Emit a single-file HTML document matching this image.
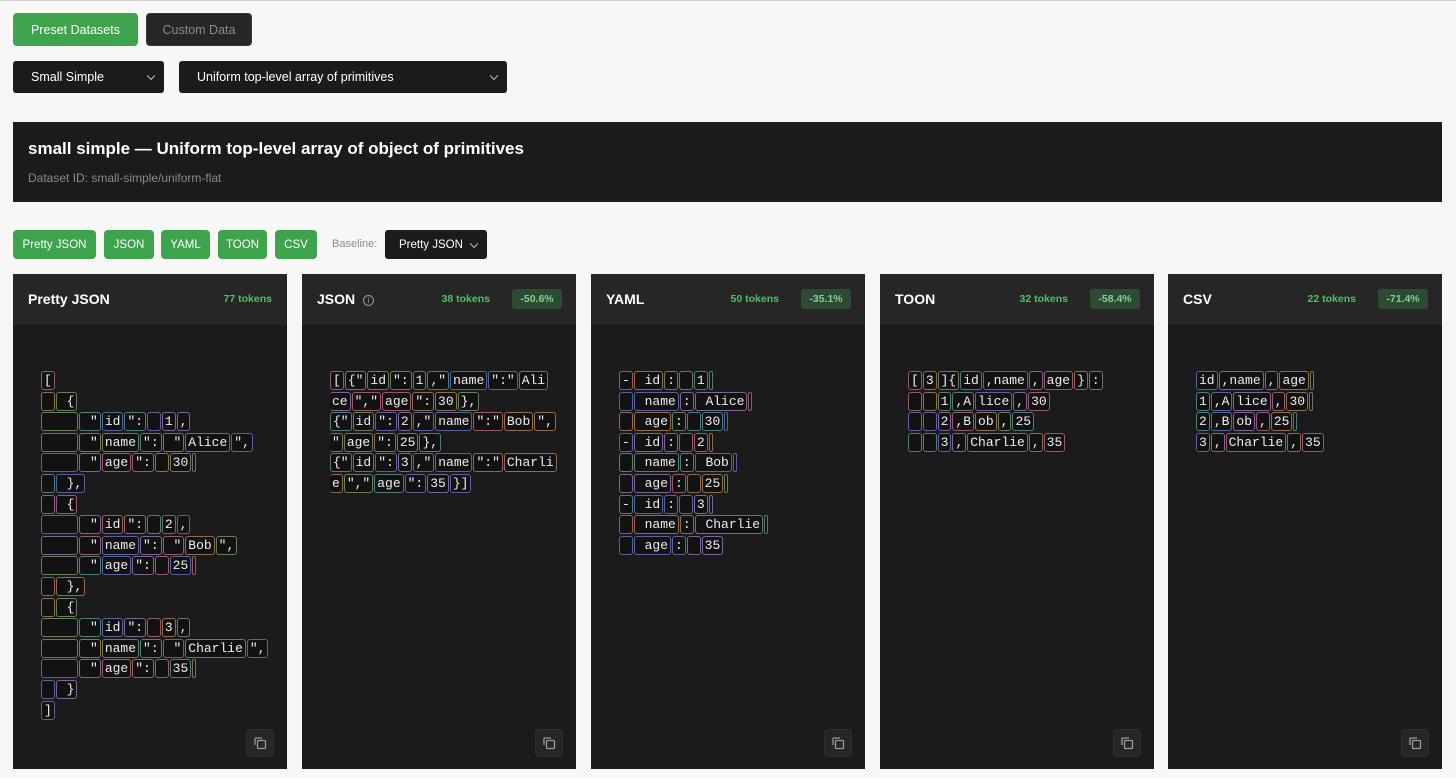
<!DOCTYPE html>
<html><head><meta charset="utf-8"><style>
*{box-sizing:border-box;margin:0;padding:0}
body{width:1456px;height:778px;background:#f7f7f5;font-family:"Liberation Sans",sans-serif;position:relative;overflow:hidden;border-top:1px solid #cfcfcf}
.abs{position:absolute}
.btn{position:absolute;border-radius:4px;font-size:12.5px;display:flex;align-items:center;justify-content:center}
.g{background:#3ea34d;color:#fff}
.sel{position:absolute;background:#1b1b1b;color:#fff;border-radius:3px;font-size:12.5px;display:flex;align-items:center;padding-left:18px}
.sel:after{content:"";position:absolute;right:10px;top:50%;width:5px;height:5px;border-right:1.3px solid #ccc;border-bottom:1.3px solid #ccc;transform:translateY(-70%) rotate(45deg)}
.panel{position:absolute;top:273px;width:274px;height:495px;background:#1b1b1b}
.ph{height:51px;background:#262626;position:relative}
.ph b{position:absolute;left:15px;top:17px;font-size:14px;color:#fff}
.tk{position:absolute;top:19px;font-size:10.5px;color:#4cc35c;font-weight:bold}
.bd{position:absolute;top:15px;right:14px;width:50px;height:20px;background:#2f4a34;color:#7ed48a;font-size:10.5px;font-weight:bold;display:flex;align-items:center;justify-content:center;border-radius:3px}
.code{position:absolute;left:28px;top:97px;font-family:"Liberation Mono",monospace;font-size:13px;color:#eee;line-height:20.6px}
.code div{height:20.6px;white-space:nowrap}
.code i{font-style:normal;display:inline-block;white-space:pre;border:1px solid;border-radius:3px;height:19px;line-height:17px;padding:0 2px;margin-right:1px;background:#121212;vertical-align:top}
.a{border-color:#9c5a68!important}.b{border-color:#936c4c!important}.c{border-color:#64805a!important}.d{border-color:#4d7d7d!important}.e{border-color:#5663a0!important}.f{border-color:#7f649c!important}
.n{width:4px;padding:0!important}
.cp{position:absolute;right:13px;bottom:12px;width:28px;height:28px;background:#262626;border-radius:4px;border:1px solid #2e2e2e}
</style></head><body>
<div class="btn g" style="left:13px;top:12px;width:125px;height:33px">Preset Datasets</div>
<div class="btn" style="left:146px;top:12px;width:106px;height:33px;background:#262626;color:#8a8a8a;border:1px solid #3a3a3a">Custom Data</div>
<div class="sel" style="left:13px;top:60px;width:151px;height:32px">Small Simple</div>
<div class="sel" style="left:179px;top:60px;width:328px;height:32px">Uniform top-level array of primitives</div>
<div class="abs" style="left:13px;top:121px;width:1429px;height:80px;background:#1b1b1b">
<div class="abs" style="left:15px;top:17px;color:#fff;font-size:17px;font-weight:bold">small simple — Uniform top-level array of object of primitives</div>
<div class="abs" style="left:15px;top:49px;color:#8a8a8a;font-size:12px">Dataset ID: small-simple/uniform-flat</div>
</div>
<div class="btn g" style="left:13px;top:229px;width:83px;height:29px;font-size:11.5px">Pretty JSON</div>
<div class="btn g" style="left:104px;top:229px;width:50px;height:29px;font-size:11.5px">JSON</div>
<div class="btn g" style="left:161px;top:229px;width:49px;height:29px;font-size:11.5px">YAML</div>
<div class="btn g" style="left:218px;top:229px;width:49px;height:29px;font-size:11.5px">TOON</div>
<div class="btn g" style="left:275px;top:229px;width:42px;height:29px;font-size:11.5px">CSV</div>
<div class="abs" style="left:332px;top:237px;font-size:11px;color:#8a8a8a">Baseline:</div>
<div class="sel" style="left:385px;top:229px;width:102px;height:29px;font-size:11.5px;padding-left:14px">Pretty JSON</div>

<div class="panel" style="left:13px"><div class="ph"><b>Pretty JSON</b><span class="tk" style="right:15px">77 tokens</span></div>
<div class="code" style="left:28px">
<div><i class="a">[</i></div>
<div><i class="b"> </i><i class="c"> {</i></div>
<div><i class="c">    </i><i class="d"> "</i><i class="e">id</i><i class="d">":</i><i class="e"> </i><i class="f">1</i><i class="f">,</i></div>
<div><i class="a">    </i><i class="b"> "</i><i class="c">name</i><i class="d">":</i><i class="b"> "</i><i class="d">Alice</i><i class="e">",</i></div>
<div><i class="e">    </i><i class="f"> "</i><i class="a">age</i><i class="a">":</i><i class="b"> </i><i class="c">30</i><i class="c n"></i></div>
<div><i class="d"> </i><i class="e"> },</i></div>
<div><i class="f"> </i><i class="a"> {</i></div>
<div><i class="e">    </i><i class="f"> "</i><i class="a">id</i><i class="b">":</i><i class="c"> </i><i class="d">2</i><i class="e">,</i></div>
<div><i class="f">    </i><i class="a"> "</i><i class="e">name</i><i class="f">":</i><i class="a"> "</i><i class="b">Bob</i><i class="c">",</i></div>
<div><i class="c">    </i><i class="d"> "</i><i class="e">age</i><i class="f">":</i><i class="a"> </i><i class="e">25</i><i class="a n"></i></div>
<div><i class="a"> </i><i class="b"> },</i></div>
<div><i class="b"> </i><i class="c"> {</i></div>
<div><i class="c">    </i><i class="d"> "</i><i class="e">id</i><i class="f">":</i><i class="a"> </i><i class="b">3</i><i class="c">,</i></div>
<div><i class="a">    </i><i class="b"> "</i><i class="c">name</i><i class="d">":</i><i class="e"> "</i><i class="f">Charlie</i><i class="e">",</i></div>
<div><i class="e">    </i><i class="f"> "</i><i class="a">age</i><i class="b">":</i><i class="a"> </i><i class="d">35</i><i class="c n"></i></div>
<div><i class="e"> </i><i class="f"> }</i></div>
<div><i class="e">]</i></div>
</div><div class="cp"><svg width="28" height="28" viewBox="0 0 28 28" fill="none" stroke="#999" stroke-width="1.3"><rect x="10.5" y="10.5" width="8" height="8" rx="1"/><path d="M8 15V9a1 1 0 0 1 1-1h6"/></svg></div></div>

<div class="panel" style="left:302px"><div class="ph"><b>JSON <span style="display:inline-block;width:11px;height:11px;border:1px solid #999;border-radius:50%;font-size:8px;color:#999;text-align:center;line-height:9px;vertical-align:1px;margin-left:4px;font-weight:normal">i</span></b><span class="tk" style="right:86px">38 tokens</span><span class="bd">-50.6%</span></div>
<div class="code">
<div><i class="a">[</i><i class="b">{"</i><i class="c">id</i><i class="c">":</i><i class="d">1</i><i class="d">,"</i><i class="e">name</i><i class="e">":"</i><i class="f">Ali</i></div>
<div><i class="f" style="border-left:0">ce</i><i class="a">","</i><i class="a">age</i><i class="b">":</i><i class="b">30</i><i class="c">},</i></div>
<div><i class="d">{"</i><i class="c">id</i><i class="e">":</i><i class="f">2</i><i class="e">,"</i><i class="e">name</i><i class="a">":"</i><i class="b">Bob</i><i class="b">",</i></div>
<div><i class="b" style="border-left:0">"</i><i class="c">age</i><i class="b">":</i><i class="c">25</i><i class="d">},</i></div>
<div><i class="d">{"</i><i class="d">id</i><i class="e">":</i><i class="f">3</i><i class="e">,"</i><i class="e">name</i><i class="a">":"</i><i class="b">Charli</i></div>
<div><i class="b" style="border-left:0">e</i><i class="c">","</i><i class="d">age</i><i class="e">":</i><i class="f">35</i><i class="e">}]</i></div>
</div><div class="cp"><svg width="28" height="28" viewBox="0 0 28 28" fill="none" stroke="#999" stroke-width="1.3"><rect x="10.5" y="10.5" width="8" height="8" rx="1"/><path d="M8 15V9a1 1 0 0 1 1-1h6"/></svg></div></div>

<div class="panel" style="left:591px"><div class="ph"><b>YAML</b><span class="tk" style="right:86px">50 tokens</span><span class="bd">-35.1%</span></div>
<div class="code">
<div><i class="a">-</i><i class="b"> id</i><i class="c">:</i><i class="c"> </i><i class="d">1</i><i class="d n"></i></div>
<div><i class="e"> </i><i class="e"> name</i><i class="f">:</i><i class="f"> Alice</i><i class="a n"></i></div>
<div><i class="b"> </i><i class="b"> age</i><i class="c">:</i><i class="d"> </i><i class="d">30</i><i class="e n"></i></div>
<div><i class="e">-</i><i class="f"> id</i><i class="f">:</i><i class="a"> </i><i class="a">2</i><i class="b n"></i></div>
<div><i class="c"> </i><i class="d"> name</i><i class="d">:</i><i class="e"> Bob</i><i class="e n"></i></div>
<div><i class="f"> </i><i class="f"> age</i><i class="a">:</i><i class="b"> </i><i class="b">25</i><i class="c n"></i></div>
<div><i class="d">-</i><i class="e"> id</i><i class="e">:</i><i class="e"> </i><i class="f">3</i><i class="f n"></i></div>
<div><i class="a"> </i><i class="b"> name</i><i class="b">:</i><i class="c"> Charlie</i><i class="d n"></i></div>
<div><i class="e"> </i><i class="e"> age</i><i class="e">:</i><i class="f"> </i><i class="f">35</i></div>
</div><div class="cp"><svg width="28" height="28" viewBox="0 0 28 28" fill="none" stroke="#999" stroke-width="1.3"><rect x="10.5" y="10.5" width="8" height="8" rx="1"/><path d="M8 15V9a1 1 0 0 1 1-1h6"/></svg></div></div>

<div class="panel" style="left:880px"><div class="ph"><b>TOON</b><span class="tk" style="right:86px">32 tokens</span><span class="bd">-58.4%</span></div>
<div class="code">
<div><i class="a">[</i><i class="b">3</i><i class="c">]{</i><i class="d">id</i><i class="e">,name</i><i class="f">,</i><i class="a">age</i><i class="b">}</i><i class="c">:</i></div>
<div><i class="a"> </i><i class="b"> </i><i class="c">1</i><i class="d">,A</i><i class="e">lice</i><i class="f">,</i><i class="a">30</i></div>
<div><i class="e"> </i><i class="e"> </i><i class="f">2</i><i class="a">,B</i><i class="b">ob</i><i class="c">,</i><i class="d">25</i></div>
<div><i class="d"> </i><i class="d"> </i><i class="e">3</i><i class="f">,</i><i class="a">Charlie</i><i class="b">,</i><i class="a">35</i></div>
</div><div class="cp"><svg width="28" height="28" viewBox="0 0 28 28" fill="none" stroke="#999" stroke-width="1.3"><rect x="10.5" y="10.5" width="8" height="8" rx="1"/><path d="M8 15V9a1 1 0 0 1 1-1h6"/></svg></div></div>

<div class="panel" style="left:1168px"><div class="ph"><b>CSV</b><span class="tk" style="right:86px">22 tokens</span><span class="bd">-71.4%</span></div>
<div class="code">
<div><i class="e">id</i><i class="f">,name</i><i class="a">,</i><i class="b">age</i><i class="c n"></i></div>
<div><i class="d">1</i><i class="e">,A</i><i class="f">lice</i><i class="a">,</i><i class="b">30</i><i class="c n"></i></div>
<div><i class="d">2</i><i class="e">,B</i><i class="f">ob</i><i class="a">,</i><i class="b">25</i><i class="d n"></i></div>
<div><i class="e">3</i><i class="f">,</i><i class="a">Charlie</i><i class="b">,</i><i class="a">35</i></div>
</div><div class="cp"><svg width="28" height="28" viewBox="0 0 28 28" fill="none" stroke="#999" stroke-width="1.3"><rect x="10.5" y="10.5" width="8" height="8" rx="1"/><path d="M8 15V9a1 1 0 0 1 1-1h6"/></svg></div></div>
</body></html>
